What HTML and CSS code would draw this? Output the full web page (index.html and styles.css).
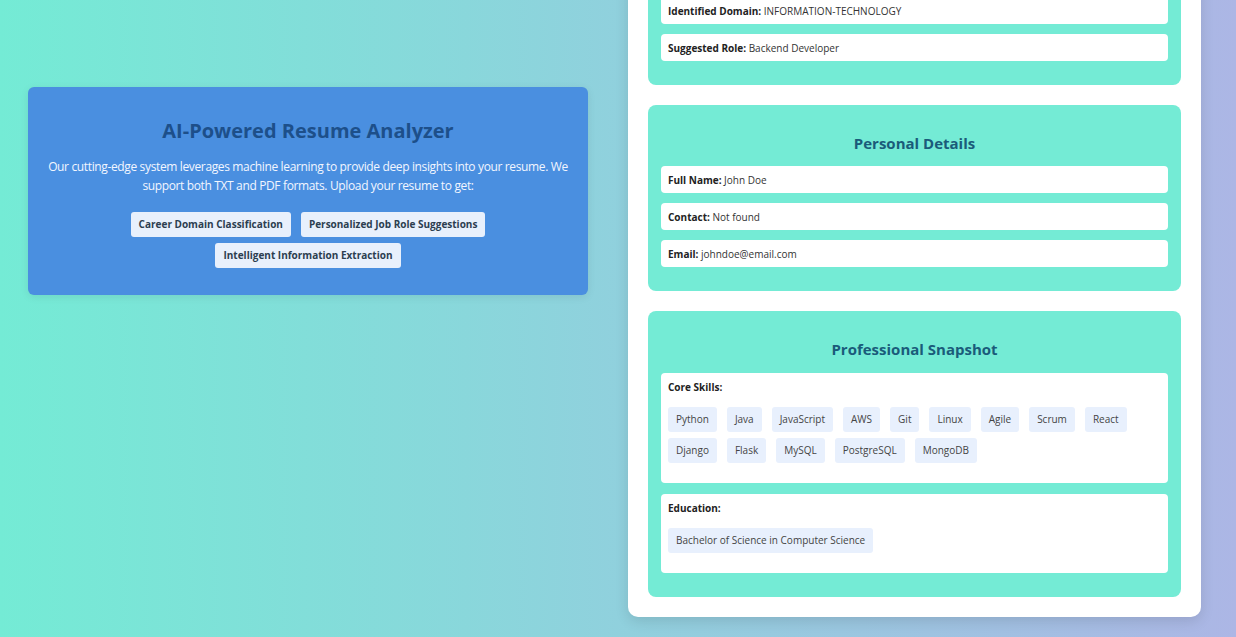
FILE: index.html
```html
<!DOCTYPE html>
<html lang="en">
<head>
<meta charset="utf-8">
<title>AI-Powered Resume Analyzer</title>
<link rel="stylesheet" href="styles.css">
</head>
<body>
<div class="page">
  <aside class="intro">
    <h2 class="intro-title">AI-Powered Resume Analyzer</h2>
    <p class="intro-text">Our cutting-edge system leverages machine learning to provide deep insights into your resume. We support both TXT and PDF formats. Upload your resume to get:</p>
    <div class="features">
      <span class="feature">Career Domain Classification</span>
      <span class="feature">Personalized Job Role Suggestions</span>
      <span class="feature">Intelligent Information Extraction</span>
    </div>
  </aside>
  <main class="results">
    <section class="section">
      <h3 class="section-title">Career Insights</h3>
      <div class="item"><b>Identified Domain:</b> INFORMATION-TECHNOLOGY</div>
      <div class="item"><b>Suggested Role:</b> Backend Developer</div>
    </section>
    <section class="section">
      <h3 class="section-title">Personal Details</h3>
      <div class="item"><b>Full Name:</b> John Doe</div>
      <div class="item"><b>Contact:</b> Not found</div>
      <div class="item"><b>Email:</b> johndoe@email.com</div>
    </section>
    <section class="section">
      <h3 class="section-title snapshot-title">Professional Snapshot</h3>
      <div class="item block">
        <b>Core Skills:</b>
        <div class="tags">
          <span class="tag">Python</span>
          <span class="tag">Java</span>
          <span class="tag">JavaScript</span>
          <span class="tag">AWS</span>
          <span class="tag">Git</span>
          <span class="tag">Linux</span>
          <span class="tag">Agile</span>
          <span class="tag">Scrum</span>
          <span class="tag">React</span>
          <span class="tag">Django</span>
          <span class="tag">Flask</span>
          <span class="tag">MySQL</span>
          <span class="tag">PostgreSQL</span>
          <span class="tag">MongoDB</span>
        </div>
      </div>
      <div class="item block edu">
        <b>Education:</b>
        <div class="tags">
          <span class="tag">Bachelor of Science in Computer Science</span>
        </div>
      </div>
    </section>
  </main>
</div>
</body>
</html>
```
FILE: styles.css
```css
* { box-sizing: border-box; }
html, body { margin: 0; padding: 0; }
body {
  height: 637px;
  overflow: hidden;
  background: linear-gradient(to right, #74ebd5, #acb6e5);
  font-family: "Open Sans", "Noto Sans", sans-serif;
  color: #333;
}
.page {
  display: flex;
  align-items: flex-start;
  gap: 40px;
  padding: 0 35px 20px 28px;
  margin-top: -84px;
}
.intro {
  width: 560px;
  flex: none;
  margin-top: 171px;
  background: #4a8fe0;
  border-radius: 6px;
  padding: 0 20px 27px;
  text-align: center;
  box-shadow: 0 2px 8px rgba(0,0,0,0.08);
}
.intro-title {
  margin: 30px 0 12px;
  font-size: 20px;
  line-height: 28px;
  font-weight: 700;
  color: #1d4f8a;
}
.intro-text {
  margin: 0 0 17px;
  font-size: 12px;
  letter-spacing: -0.36px;
  line-height: 19px;
  color: #f2f6ff;
}
.features {
  display: flex;
  flex-wrap: wrap;
  justify-content: center;
  gap: 6px 10px;
  padding: 0 80px;
}
.feature {
  background: #e8f0fc;
  color: #2c3e50;
  font-size: 10px;
  font-weight: 700;
  line-height: 15px;
  padding: 5px 8px;
  border-radius: 3px;
}
.results {
  width: 573px;
  flex: none;
  background: #fff;
  border-radius: 10px;
  padding: 20px;
  display: flex;
  flex-direction: column;
  gap: 20px;
  box-shadow: 0 4px 14px rgba(0,0,0,0.12);
}
.section {
  background: #74ebd5;
  border-radius: 8px;
  padding: 13px 13px 14px;
}
.section-title {
  margin: 15px 0 12px;
  font-size: 15px;
  line-height: 21px;
  text-align: center;
  color: #1a5b7a;
  font-weight: 700;
}
.snapshot-title { margin-bottom: 13px; }
.item {
  background: #fff;
  border-radius: 4px;
  padding: 7px 7px 5px;
  font-size: 10px;
  line-height: 15px;
  color: #333;
  margin-bottom: 10px;
}
.item b { color: #222; }
.item.block { padding-bottom: 20px; }
.item.edu { margin-top: 11px; }
.tags {
  display: flex;
  flex-wrap: wrap;
  gap: 6px 10px;
  margin-top: 12px;
}
.tag {
  background: #e8f0fd;
  color: #444;
  font-size: 10px;
  line-height: 15px;
  padding: 5px 8px;
  border-radius: 3px;
}
```
